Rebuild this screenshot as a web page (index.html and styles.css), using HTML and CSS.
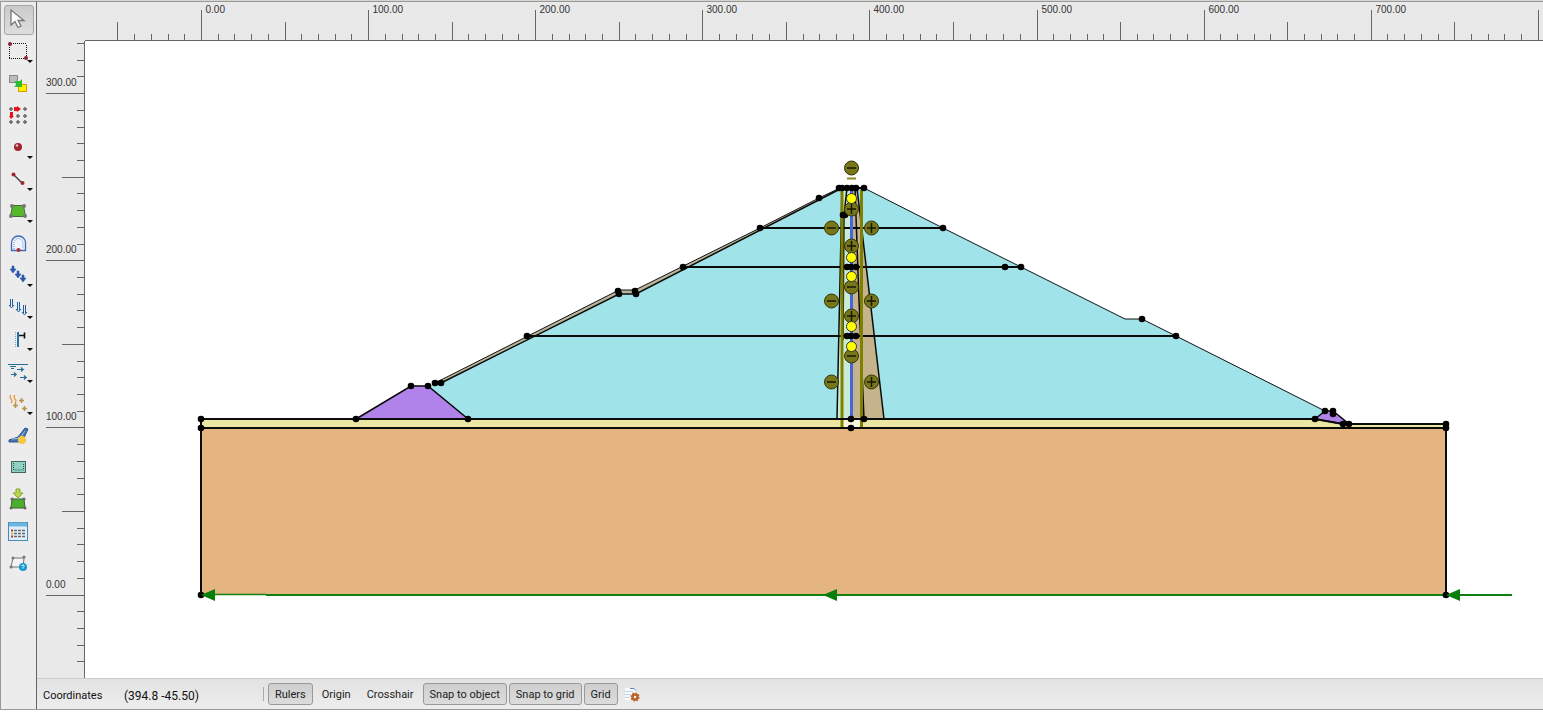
FILE: index.html
```html
<!DOCTYPE html>
<html lang="en">
<head>
<meta charset="utf-8">
<title>Model editor</title>
<link rel="stylesheet" href="styles.css">
</head>
<body>
<div class="app">
  <nav class="toolbar" aria-label="Tools">
    <button class="tool active" aria-label="Select"><svg viewBox="0 0 30 30"><path d="M7 5v15l4-3.500 3 6 3-1.500-3-5.500h6z" fill="#fff" stroke="#777" stroke-width="1.300"/></svg></button>
    <button class="tool" aria-label="Select area"><svg viewBox="0 0 30 30"><path d="M5 6.500h18M5 21.500h18M5.500 8v13M22.500 8v13" fill="none" stroke="#111" stroke-dasharray="1 1"/><circle cx="6" cy="7" r="2" fill="#8a2634"/><circle cx="22" cy="21" r="2" fill="#8a2634"/><path class="caret" d="M23 23h6l-3 3z"/></svg></button>
    <button class="tool" aria-label="Move object"><svg viewBox="0 0 30 30"><rect x="5.500" y="6.500" width="8" height="7" fill="#bbb" stroke="#888"/><rect x="14.500" y="15.500" width="8" height="7" fill="#fff000" stroke="#d89a00"/><path d="M11 12h5l2-2v8h-8l2-2z" fill="#2ebd2e"/></svg></button>
    <button class="tool" aria-label="Create array"><svg viewBox="0 0 30 30"><g fill="#999" stroke="#555"><circle cx="7" cy="8" r="1.300"/><circle cx="21" cy="8" r="1.300"/><circle cx="14" cy="15" r="1.300"/><circle cx="21" cy="15" r="1.300"/><circle cx="7" cy="21" r="1.300"/><circle cx="14" cy="21" r="1.300"/><circle cx="21" cy="21" r="1.300"/></g><path d="M10 6h3V5l4 3-4 3v-1h-3zM6 11h3v4h1l-3 3-2-3h1z" fill="#e3121c"/></svg></button>
    <button class="tool" aria-label="Create point"><svg viewBox="0 0 30 30"><circle cx="14" cy="14" r="4" fill="#a02330"/><circle cx="13" cy="12.500" r="1.300" fill="#ecb5ba"/><path class="caret" d="M23 23h6l-3 3z"/></svg></button>
    <button class="tool" aria-label="Create line"><svg viewBox="0 0 30 30"><path d="M9 9l9 9" stroke="#444" stroke-width="1.400"/><circle cx="9.500" cy="9.500" r="2" fill="#a02330"/><circle cx="18.500" cy="18" r="2" fill="#a02330"/><path class="caret" d="M23 23h6l-3 3z"/></svg></button>
    <button class="tool" aria-label="Create soil polygon"><svg viewBox="0 0 30 30"><path d="M8.500 8.500h11l2 11H6.500z" fill="#55b82b" stroke="#456c38"/><g fill="#777"><circle cx="8" cy="9" r="2"/><circle cx="20" cy="9" r="2"/><circle cx="7" cy="19" r="2"/><circle cx="21" cy="19" r="2"/></g><path class="caret" d="M23 23h6l-3 3z"/></svg></button>
    <button class="tool" aria-label="Design tunnel"><svg viewBox="0 0 30 30"><path d="M7.500 21.500V14a7 7 0 0 1 14 0v7.500z" fill="#eef4fd" stroke="#3e6bb5" stroke-width="1.300"/><path d="M10 20v-6a4.500 4.500 0 0 1 9 0v6" fill="none" stroke="#6a8fc7" stroke-dasharray="1 1"/><circle cx="14.500" cy="21" r="2" fill="#b42a34"/></svg></button>
    <button class="tool" aria-label="Create load"><svg viewBox="0 0 30 30"><path d="M8 5h2v3h2l-3 4-3-4h2zM13 10h2v3h2l-3 4-3-4h2zM18 14h2v3h2l-3 4-3-4h2z" fill="#2c58ae" stroke="#2c58ae" stroke-width=".6"/><path class="caret" d="M23 23h6l-3 3z"/></svg></button>
    <button class="tool" aria-label="Create prescribed displacement"><svg viewBox="0 0 30 30"><g fill="none" stroke="#245f9c"><path d="M6.500 6v7M8.500 6v7M5 12l2.500 3 2.500-3M13.500 9v8M15.500 9v8M12 16l2.500 3 2.500-3M19.500 12v8M21.500 12v8M18 19l2.500 3 2.500-3"/></g><path class="caret" d="M23 23h6l-3 3z"/></svg></button>
    <button class="tool" aria-label="Create structure"><svg viewBox="0 0 30 30"><path d="M14 7v15" stroke="#2474ac" stroke-width="2"/><path d="M11.500 7v15" stroke="#7aa6c8" stroke-dasharray="1 1"/><path d="M15 10.500h5M20.500 7.500v6" stroke="#111" stroke-width="1.600"/><path class="caret" d="M23 23h6l-3 3z"/></svg></button>
    <button class="tool" aria-label="Create hydraulic condition"><svg viewBox="0 0 30 30"><path d="M4 7.500h20M6 9.500h6M7 11.500h3M13 12.500h6l-2-2m2 2l-2 2M7 17.500h5l-2-2m2 2l-2 2M16 20.500h6l-2-2m2 2l-2 2" fill="none" stroke="#286b96" stroke-width="1.200"/><path class="caret" d="M23 23h6l-3 3z"/></svg></button>
    <button class="tool" aria-label="Create thermal condition"><svg viewBox="0 0 30 30"><path d="M7 6q-2 2 0 4t0 4M11 6q-2 2 0 4t0 4" fill="none" stroke="#e69a48" stroke-width="1.200"/><path d="M15 11.500h5m-2.500-2.500v5M9 16.500h5m-2.500-2.500v5M18 19.500h5m-2.500-2.500v5" stroke="#b99140" stroke-width="1.500"/><path class="caret" d="M23 23h6l-3 3z"/></svg></button>
    <button class="tool" aria-label="Create cross section"><svg viewBox="0 0 30 30"><path d="M5 19l9-3 7-9 3 1-4 9-5 4H5z" fill="#4775b4" stroke="#31558b"/><path d="M8 18l8-1 5-7" fill="none" stroke="#a9c3e6"/><circle cx="18" cy="19" r="4" fill="#f3c842"/></svg></button>
    <button class="tool" aria-label="Show water"><svg viewBox="0 0 30 30"><rect x="7.500" y="8.500" width="14" height="11" fill="#8fd0c2" stroke="#47665f"/><path d="M9.500 10v7h10v-7" fill="none" stroke="#28584e" stroke-dasharray="1 1"/></svg></button>
    <button class="tool" aria-label="Import geometry"><svg viewBox="0 0 30 30"><path d="M12 4h4v4h3l-5 5-5-5h3z" fill="#b6d94b" stroke="#86a833"/><path d="M8 14h12l1 9H7z" fill="#4bae2d" stroke="#3f6034"/><g fill="#666"><circle cx="8" cy="14" r="1.500"/><circle cx="20" cy="14" r="1.500"/><circle cx="7" cy="23" r="1.500"/><circle cx="21" cy="23" r="1.500"/></g></svg></button>
    <button class="tool" aria-label="Show materials"><svg viewBox="0 0 30 30"><rect x="4.500" y="5.500" width="19" height="18" fill="#e2eff8" stroke="#438bb8"/><path d="M5 7.500h18" stroke="#6bb7df" stroke-width="4"/><path d="M10 13.500h11M10 16.500h11M10 19.500h11" stroke="#666" stroke-width="1.500" stroke-dasharray="3 1"/><path d="M7 13.500h2M7 19.500h2" stroke="#b43c36" stroke-width="2"/><path d="M7 16.500h2" stroke="#dfb52e" stroke-width="2"/></svg></button>
    <button class="tool" aria-label="Inspect geometry"><svg viewBox="0 0 30 30"><path d="M9 9h11l-1 9H7z" fill="#f4f4f4" stroke="#777"/><g fill="#777"><circle cx="9" cy="9" r="1.500"/><circle cx="20" cy="8" r="1.500"/><circle cx="7" cy="18" r="1.500"/></g><circle cx="19" cy="18" r="4" fill="#189bd1"/><path d="M17.500 16.500q3-1.500 2.500 1l-1 1v1" fill="none" stroke="#fff"/></svg></button>
  </nav>

  <main class="workspace">
    <svg class="ruler-top" id="ruler-x" aria-label="Horizontal ruler"></svg>
    <svg class="ruler-left" id="ruler-y" aria-label="Vertical ruler"></svg>
    <svg class="canvas" aria-label="Dam cross section">
      <g transform="translate(-85 -41)">
        <!-- foundation -->
        <path d="M201 428H1446V595H201z" fill="#e4b581"/>
        <path d="M201 419H1315L1343 424H1446V428H201z" fill="#ebe7a2"/>
        <!-- embankment -->
        <path d="M428 386L441 382L619 294H636L842 188H864L943 228L1021 267L1125 319H1142L1176 336L1325 411L1315 419H468z" fill="#a0e3e8"/>
        <path d="M435 383L619 290H635L760 228L819 198L840 188H844L636 294H619L441 383z" fill="#b9b59d"/>
        <path d="M864 188L943 228L1021 267L1125 319H1142L1176 336L1325 411" class="thin"/>
        <path d="M435 383L619 290H635L760 228L819 198L840 188" class="thin"/>
        <path d="M441 383L619 294H636L842 188" class="slope"/>
        <!-- core -->
        <path d="M842 188H852V419H837z" fill="#c8ecd8"/>
        <path d="M852 188H857L884 419H852z" fill="#c4b38b"/>
        <path d="M843 419H861V427H843z" fill="#f6f7dc"/>
        <path d="M760 228H943M683 267H1021M527 336H1176M840 188H864" class="edge"/>
        <path d="M842 188L837 419M847 188L844 215L843 340M855 188L859 300L864 419M857 188L884 419" class="slope"/>
        <path d="M851.500 188V419" stroke="#4467dc" stroke-width="3"/>
        <path d="M842 190V427M861.500 190V427" stroke="#808000" stroke-width="3"/>
        <path d="M847 178.500H856" stroke="#8b8a20" stroke-width="2"/>
        <!-- toes -->
        <path d="M356 419L411 386H428L468 419z" class="toe"/>
        <path d="M1315 419L1325 411H1333L1349 424H1343z" class="toe"/>
        <path d="M201 419H1315L1343 424H1446M201 428H1446M201 419V595M1446 424V595" class="edge"/>
        <!-- base flow line -->
        <path d="M201 594.500H266" stroke="#108010" stroke-width="1.500"/>
        <path d="M266 595H1446" stroke="#108010" stroke-width="2"/>
        <path d="M1446 595H1512" stroke="#108010" stroke-width="2"/>
        <g id="nodes"></g>
        <path d="M201 595l14-6v12zM823 595l14-6v12zM1446 595l14-6v12z" fill="#087f0b"/>
        <g id="interfaces"></g>
      </g>
    </svg>
  </main>

  <footer class="status">
    <span class="coord-label">Coordinates</span>
    <output class="coord">(394.8 -45.50)</output>
    <div class="toggles">
      <button class="toggle on" aria-pressed="true">Rulers</button>
      <button class="toggle" aria-pressed="false">Origin</button>
      <button class="toggle" aria-pressed="false">Crosshair</button>
      <button class="toggle on" aria-pressed="true">Snap to object</button>
      <button class="toggle on" aria-pressed="true">Snap to grid</button>
      <button class="toggle on" aria-pressed="true">Grid</button>
      <button class="options" aria-label="Snapping options"><svg viewBox="0 0 16 16"><path d="M1 2h8l3 3v9H1z" fill="#fafafa"/><path d="M1 5.500h8M1 8.500h6M1 11.500h5" stroke="#bad7ec"/><path d="M6 2.500h4l2 2" fill="none" stroke="#5b8fc7"/><circle cx="11" cy="11" r="2.500" fill="none" stroke="#bd6029" stroke-width="2.500"/><circle cx="11" cy="11" r="4" fill="none" stroke="#bd6029" stroke-width="1.200" stroke-dasharray="1.700 1.400"/></svg></button>
    </div>
  </footer>
</div>
<script src="app.js"></script>
</body>
</html>
```
FILE: styles.css
```css
* { box-sizing: border-box; }
body {
  margin: 0;
  background: #fff;
  color: #222;
  font: 11px Roboto, "Open Sans", sans-serif;
}
button {
  margin: 0;
  padding: 0;
  border: 1px solid transparent;
  background: none;
  color: inherit;
  font: inherit;
}
svg { display: block; }
.app {
  display: grid;
  grid-template: 1fr 31px / 37px 1fr;
  height: calc(100vh - 2px);
  background: #e9e9e9;
  border-top: 1px solid #d4d4d0;
  border-bottom: 1px solid #999;
}
.toolbar {
  grid-row: 1 / 3;
  display: flex;
  flex-direction: column;
  gap: 2px;
  padding: 3px 2px 0 3px;
  background: #ececec;
  border-top: 1px solid #999;
  border-left: 1px solid #999;
  border-right: 1px solid #666;
}
.tool { width: 30px; height: 30px; border-radius: 3px; }
.tool.active {
  border-color: #a5a5a5;
  background: linear-gradient(#cacaca, #dedede);
}
.tool svg { width: 30px; height: 30px; margin: -1px; }
.caret { fill: #111; }
.workspace {
  display: grid;
  grid-template: 39px 1fr / 48px 1fr;
  min-height: 0;
  border-top: 1px solid #999;
}
.ruler-top { grid-column: 1 / 3; width: 100%; height: 100%; }
.ruler-left { width: 100%; height: 100%; }
.canvas { width: 100%; height: 100%; background: #fff; }
.ruler-top path, .ruler-left path { stroke: #666; fill: none; }
.ruler-top text, .ruler-left text {
  fill: #333;
  font: 10px "Liberation Sans", Arial, sans-serif;
}
.edge { fill: none; stroke: #0b0b0b; stroke-width: 2; }
.thin { fill: none; stroke: #111; stroke-width: 1; }
.slope { fill: none; stroke: #0b0b0b; stroke-width: 1.500; }
.toe { fill: #b083ea; stroke: #080808; stroke-width: 1.500; }
.yellow { fill: #ffff00; stroke: #333; }
.interface { fill: #77771a; stroke: #353508; }
.sign { stroke: #171707; stroke-width: 1.500; }
.status {
  display: flex;
  align-items: center;
  padding-left: 6px;
  border-top: 1px solid #ccc;
  background: linear-gradient(#e2e2e2, #ededed);
}
.coord-label, .coord { padding-top: 3px; color: #111; }
.coord-label { width: 81px; }
.coord { width: 139px; font-size: 12px; }
.toggles {
  display: flex;
  align-items: center;
  gap: 2px;
}
.toggles::before {
  content: "";
  height: 14px;
  margin-right: 2px;
  border-left: 1px solid #aaa;
}
.toggle {
  height: 22px;
  padding: 0 6px;
  border-radius: 3px;
  white-space: nowrap;
}
.toggle.on {
  border-color: #999;
  background: linear-gradient(#cecece, #dcdcdc);
}
.options { padding: 0 3px; }
.options svg { width: 16px; height: 16px; }
```
FILE: app.js
```js
const NS = "http://www.w3.org/2000/svg";

function add(parent, name, attrs, text) {
  const el = document.createElementNS(NS, name);
  for (const key in attrs) el.setAttribute(key, attrs[key]);
  if (text) el.textContent = text;
  parent.appendChild(el);
}

const step = 16.71;
const labelWidth = 36;
const rulerX = document.getElementById("ruler-x");
const rulerY = document.getElementById("ruler-y");

// Ten ticks per hundred units, with longer ones at fifty and one hundred.
function drawRulerX() {
  rulerX.replaceChildren();
  const width = rulerX.clientWidth;
  let ticks = `M48 38.5H${width}`;
  for (let i = -5; 164 + i * step < width; i++) {
    const x = Math.round(164 + i * step) + 0.5;
    const top = i % 10 === 0 ? 8 : i % 5 === 0 ? 20 : 32;
    ticks += `M${x} ${top}V38`;
    if (i % 10 === 0 && x + labelWidth < width) {
      add(rulerX, "text", { x: x + 4, y: 11 }, (i * 10).toFixed(2));
    }
  }
  add(rulerX, "path", { d: ticks });
}

function drawRulerY() {
  rulerY.replaceChildren();
  const height = rulerY.clientHeight;
  let ticks = `M47.5 0V${height}`;
  for (let i = 33; 554 - i * step < height; i--) {
    const y = Math.floor(554 - i * step) + 0.5;
    const left = i % 10 === 0 ? 9 : i % 5 === 0 ? 25 : 40;
    ticks += `M${left} ${y}H48`;
    if (i % 10 === 0) add(rulerY, "text", { x: 9, y: y - 8 }, (i * 10).toFixed(2));
  }
  add(rulerY, "path", { d: ticks });
}

function drawRulers() {
  drawRulerX();
  drawRulerY();
}
drawRulers();
window.addEventListener("resize", drawRulers);

const nodes = [
  [201, 419], [201, 428], [201, 595], [356, 419], [411, 386], [428, 386],
  [468, 419], [435, 383], [441, 383], [527, 336], [618, 291], [619, 294],
  [635, 291], [636, 294], [683, 267], [760, 228], [819, 198], [839, 188],
  [842, 188], [847, 188], [852, 188], [856, 188], [864, 188], [843, 215],
  [845, 215], [943, 228], [847, 267], [851, 267], [856, 267], [1005, 267],
  [1021, 267], [847, 336], [851, 336], [856, 336], [1142, 319], [1176, 336],
  [851, 419], [864, 419], [851, 428], [1315, 419], [1325, 411], [1333, 411],
  [1333, 414], [1343, 424], [1349, 424], [1446, 424], [1446, 428], [1446, 595]
];
const nodeLayer = document.getElementById("nodes");
nodes.forEach(([cx, cy]) => add(nodeLayer, "circle", { cx, cy, r: 3.3 }));

const marks = [
  [851, 168, "-"], [851, 209, "+"], [851, 246, "+"], [851, 287, "-"],
  [851, 316, "+"], [851, 356, "-"], [831, 228, "-"], [831, 301, "-"],
  [831, 382, "-"], [871, 228, "+"], [871, 301, "+"], [871, 382, "+"]
];
const markLayer = document.getElementById("interfaces");
marks.forEach(([x, y, sign]) => {
  add(markLayer, "circle", { cx: x + 0.5, cy: y, r: 7, class: "interface" });
  const vertical = sign === "+" ? `M${x + 0.5} ${y - 5}v10` : "";
  add(markLayer, "path", { d: `M${x - 4} ${y}h9${vertical}`, class: "sign" });
});
[198, 257, 276, 326, 346].forEach(y =>
  add(markLayer, "circle", { cx: 851.5, cy: y + 0.5, r: 5, class: "yellow" }));
```
